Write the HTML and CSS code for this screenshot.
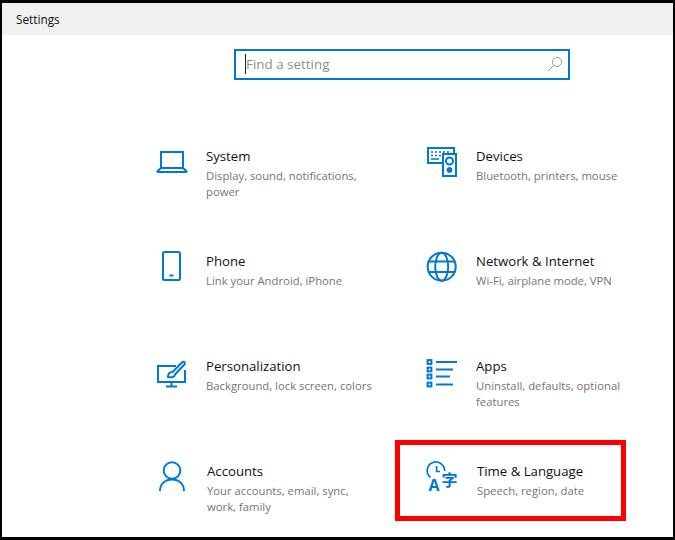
FILE: index.html
```html
<!DOCTYPE html>
<html lang="en">
<head>
<meta charset="utf-8">
<title>Settings</title>
<link rel="stylesheet" href="styles.css">
</head>
<body>
<div class="window">
  <header class="titlebar">Settings</header>
  <main class="content">
    <div class="search">
      <span class="caret"></span>
      <span class="placeholder">Find a setting</span>
      <svg class="search-icon" viewBox="0 0 16 16"><circle cx="10" cy="6" r="4.6"/><path d="M6.700 9.300 1 15"/></svg>
    </div>
    <div class="grid">
      <section class="item">
        <svg class="icon" viewBox="0 0 38 38"><rect x="6" y="6" width="22" height="16"/><path d="M6 22 2.500 25.200a.5.5 0 0 0 .4.8h28.200a.5.5 0 0 0 .4-.8L28 22"/></svg>
        <div class="text"><h2>System</h2><p>Display, sound, notifications, power</p></div>
      </section>
      <section class="item">
        <svg class="icon" viewBox="0 0 38 38"><path d="M17 17H3V2h26v5"/><path class="thin" d="M6 6h2M10 6h2M14 6h2M18 6h2M22 6h2M6 9.500h2M10 9.500h2M14 9.500h2M6 13h8"/><rect x="18" y="8" width="13" height="22"/><circle cx="24.500" cy="15" r="3.500"/><circle class="solid" cx="24.500" cy="24" r="2.500"/></svg>
        <div class="text"><h2>Devices</h2><p>Bluetooth, printers, mouse</p></div>
      </section>
      <section class="item">
        <svg class="icon" viewBox="0 0 38 38"><rect x="8" y="1" width="17" height="28" rx="1.500"/><path d="M14.500 24.500h4"/></svg>
        <div class="text"><h2>Phone</h2><p>Link your Android, iPhone</p></div>
      </section>
      <section class="item">
        <svg class="icon" viewBox="0 0 38 38"><circle cx="16.700" cy="15.700" r="14"/><ellipse cx="16.700" cy="15.700" rx="6.500" ry="14"/><path d="M4 10.500h25.400M4 21h25.400"/></svg>
        <div class="text"><h2>Network &amp; Internet</h2><p>Wi-Fi, airplane mode, VPN</p></div>
      </section>
      <section class="item">
        <svg class="icon" viewBox="0 0 38 38"><path d="M21 10H3v16h27V14"/><path d="M16.500 26v4M11 30.500h11"/><path class="brush" d="M13 21c0-3.500 2-5 4.500-5l9.500-9.500c1.800-1.800 4 .4 2.200 2.200L20 18.500c0 2-2.500 3.500-7 2.500z"/></svg>
        <div class="text"><h2>Personalization</h2><p>Background, lock screen, colors</p></div>
      </section>
      <section class="item">
        <svg class="icon" viewBox="0 0 38 38"><rect x="2.600" y="4.100" width="3.800" height="3.800"/><rect x="2.600" y="11.600" width="3.800" height="3.800"/><rect x="2.600" y="18.600" width="3.800" height="3.800"/><rect x="2.600" y="26.600" width="3.800" height="3.800"/><path d="M11 6h21M11 13.500h17M11 20.500h14M11 28.500h17"/></svg>
        <div class="text"><h2>Apps</h2><p>Uninstall, defaults, optional features</p></div>
      </section>
      <section class="item shifted">
        <svg class="icon" viewBox="0 0 38 38"><circle cx="17" cy="9.500" r="8.300"/><path d="M5 30c0-7 5-11.500 12-11.500S29 23 29 30"/></svg>
        <div class="text"><h2>Accounts</h2><p>Your accounts, email, sync, work, family</p></div>
      </section>
      <section class="item shifted">
        <svg class="icon" viewBox="0 0 38 38"><path class="clock" d="M5.500 16.500A8.700 8.700 0 1 1 19.600 10"/><path class="clock" d="M11.600 5v5.500H15"/><text class="glyph-a" x="3.500" y="29.500">A</text><text class="glyph-zi" x="16.500" y="25">字</text></svg>
        <div class="text"><h2>Time &amp; Language</h2><p>Speech, region, date</p></div>
        <span class="highlight"></span>
      </section>
    </div>
  </main>
</div>
</body>
</html>
```
FILE: styles.css
```css
* { box-sizing: border-box; }
html, body { margin: 0; padding: 0; background: #fff; }
body { font-family: "Open Sans", "Noto Sans", sans-serif; color: #000; }
.window {
  width: 675px;
  height: 540px;
  overflow: hidden;
  border-style: solid;
  border-color: #000;
  border-width: 3px 2px 3px 2px;
  background: #fff;
}
.titlebar {
  height: 32px;
  background: #f0f0f0;
  padding-left: 14px;
  font-size: 11.800px;
  line-height: 33px;
  color: #111;
}
.content { padding: 14px 0 0 153px; }
.search {
  position: relative;
  display: flex;
  align-items: center;
  width: 336px;
  height: 31px;
  margin-left: 79px;
  border: 2px solid #0078d7;
  padding-left: 10px;
  padding-bottom: 2px;
}
.caret { position: absolute; left: 9px; top: 3px; width: 1px; height: 20px; background: #222; }
.placeholder { font-size: 13.400px; color: #8f8f8f; }
.search-icon {
  width: 16px;
  height: 16px;
  margin-left: auto;
  margin-right: 5px;
  fill: none;
  stroke: #9a9a9a;
  stroke-width: 1;
}
.grid {
  display: grid;
  grid-template-columns: 270px 240px;
  grid-auto-rows: 105px;
  margin-top: 66px;
}
.item { position: relative; display: flex; }
.shifted .text { margin-left: 1px; }
.icon {
  flex: none;
  width: 38px;
  height: 38px;
  margin-right: 13px;
  overflow: visible;
  fill: none;
  stroke: #0078d7;
  stroke-width: 2;
}
.icon .thin { stroke-width: 1.600; }
.icon .solid { fill: #0078d7; stroke-width: 1; }
.icon .clock { stroke-width: 1.700; }
.icon .brush { fill: #fff; }
.glyph-a, .glyph-zi { fill: #0078d7; stroke: none; }
.glyph-a { font: 700 16px "Open Sans", sans-serif; }
.glyph-zi { font: 700 16px "Noto Sans CJK SC", sans-serif; }
.text { width: 172px; }
h2 { margin: 0 0 2px; font-size: 13.200px; font-weight: 400; line-height: 20px; color: #111; }
p { margin: 0; font-size: 11.300px; line-height: 16px; color: #747474; }
.highlight {
  position: absolute;
  left: -30px;
  top: -21px;
  width: 231px;
  height: 81px;
  border: solid #f00;
  border-width: 5px;
}
```
